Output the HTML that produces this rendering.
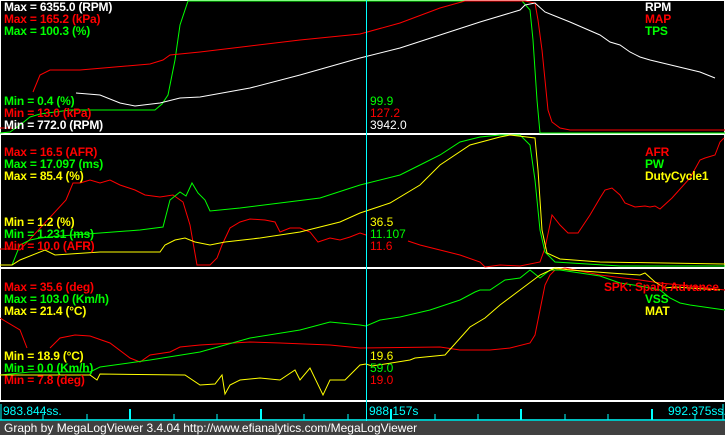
<!DOCTYPE html><html><head><style>
body{margin:0;background:#000;width:725px;height:435px;overflow:hidden;position:relative;font-family:"Liberation Sans",Arial,sans-serif}
.t{position:absolute;font-size:12px;font-weight:bold;line-height:12px;white-space:nowrap;letter-spacing:-0.2px}
.v{position:absolute;font-size:12px;line-height:12px;white-space:nowrap}
.w{color:#fff}.r{color:#f00}.g{color:#0f0}.y{color:#ff0}.c{color:#0ff}
</style></head><body>
<svg width="725" height="435" style="position:absolute;left:0;top:0" fill="none" stroke-width="1">
<line x1="0" y1="0.5" x2="725" y2="0.5" stroke="#fff"/>
<line x1="0" y1="134" x2="725" y2="134" stroke="#fff" stroke-width="2"/>
<line x1="0" y1="268" x2="725" y2="268" stroke="#fff" stroke-width="2"/>
<line x1="0" y1="401" x2="725" y2="401" stroke="#fff" stroke-width="2"/>
<line x1="0.5" y1="0" x2="0.5" y2="402" stroke="#fff"/>
<line x1="724.5" y1="0" x2="724.5" y2="402" stroke="#fff"/>
<polyline stroke="#0f0" points="0,133 10,132 20,125 30,117 40,114 70,110 155,110 162,104 168,95 175,60 180,25 188,1 522,1 530,10 533,40 537,100 540,133 725,133"/>
<polyline stroke="#f00" points="0,128 12,128"/>
<polyline stroke="#f00" points="33,92 40,75 50,70 80,70 150,64 163,60 170,55 200,52 250,46 300,40 360,34 400,23 440,8 465,1 525,1 535,3 538,20 542,50 545,80 548,110 552,122 560,128 570,130 725,130"/>
<polyline stroke="#fff" points="76,93 100,95 120,103 135,106 160,103 180,98 200,97 250,88 300,75 360,58 400,48 440,35 480,22 520,10 525,5 535,3 545,12 555,16 570,22 600,35 610,42 620,45 630,52 640,57 650,60 700,72 715,78"/>
<polyline stroke="#f00" points="0,249 6,249 12,249 20,250 66,200 73,183 80,183 90,180 100,183 110,180 120,185 135,190 145,195 160,197 173,195 183,202 190,225 197,265 210,265 217,258 222,245 230,228 240,222 250,219 265,220 275,222 280,232 290,228 300,228 310,232 318,242 330,238 340,240 350,237 360,233 366,235"/>
<polyline stroke="#f00" points="408,241 420,245 440,250 460,255 480,262 485,267 500,265 520,266 540,262 545,248 552,215 560,225 568,233 578,233 590,215 600,198 605,190 612,188 620,195 625,203 635,207 645,206 650,207 655,206 660,209 672,198 690,178 700,160 705,158 715,155 720,142 724,138"/>
<polyline stroke="#0f0" points="0,265 12,265 20,245 30,240 40,238 60,236 100,233 140,230 163,227 170,200 180,192 186,196 192,183 198,193 205,200 210,211 240,208 280,203 320,198 360,185 400,175 420,165 440,155 460,142 480,137 500,135 520,135 530,145 535,180 540,230 545,252 555,262 620,266 725,266"/>
<polyline stroke="#ff0" points="0,265 12,265 20,260 45,250 55,255 100,252 160,252 165,245 175,240 185,238 195,242 210,245 225,242 260,238 300,232 340,222 360,213 390,203 420,185 440,165 470,145 500,137 510,135 535,138 538,170 542,230 547,253 560,259 600,262 725,264"/>
<polyline stroke="#f00" points="0,318 20,330 27,348"/>
<polyline stroke="#f00" points="50,348 60,338 75,335 90,336 110,343 130,358 140,362 150,355 170,352 180,347 200,345 250,342 280,343 330,345 360,348 440,347 460,350 490,350 510,348 530,343 535,335 540,310 545,285 550,275 555,270 565,268 600,275 640,280 660,283 700,287 725,290"/>
<polyline stroke="#0f0" points="0,375 30,372 90,372 100,367 150,360 200,352 250,338 300,330 330,322 360,325 366,326 380,320 400,317 430,310 460,300 475,292 480,290 490,290 505,280 520,278 530,270 540,278 550,270 560,270 580,273 600,276 620,283 640,286 660,290 670,298 680,303 690,305 725,310"/>
<polyline stroke="#ff0" points="0,375 90,375 97,380 100,374 185,375 200,385 215,384 222,375 225,394 230,385 240,380 260,378 280,380 295,370 300,380 310,368 323,395 330,380 345,380 360,365 366,364 372,366 410,360 415,358 445,355 470,327 485,318 500,305 520,290 540,275 555,268 570,270 610,273 640,275 645,273 655,282 665,288 675,287 720,290"/>
<line x1="366.5" y1="0" x2="366.5" y2="421" stroke="#0ff"/>
<line x1="0" y1="420" x2="725" y2="420" stroke="#0ff" stroke-width="1.5"/>
<g stroke="#0ff">
<line x1="1" y1="404" x2="1" y2="420"/><line x1="43" y1="414" x2="43" y2="420"/><line x1="87" y1="414" x2="87" y2="420"/><line x1="130" y1="409" x2="130" y2="420" stroke-width="2"/><line x1="174" y1="414" x2="174" y2="420"/><line x1="217" y1="414" x2="217" y2="420"/><line x1="261" y1="409" x2="261" y2="420" stroke-width="2"/><line x1="304" y1="414" x2="304" y2="420"/><line x1="348" y1="414" x2="348" y2="420"/><line x1="391" y1="409" x2="391" y2="420" stroke-width="2"/><line x1="435" y1="414" x2="435" y2="420"/><line x1="478" y1="414" x2="478" y2="420"/><line x1="521" y1="409" x2="521" y2="420" stroke-width="2"/><line x1="565" y1="414" x2="565" y2="420"/><line x1="608" y1="414" x2="608" y2="420"/><line x1="652" y1="409" x2="652" y2="420" stroke-width="2"/><line x1="695" y1="414" x2="695" y2="420"/><line x1="723" y1="404" x2="723" y2="420"/>
</g>
</svg>
<div class="t w" style="left:4px;top:1px">Max = 6355.0 (RPM)</div>
<div class="t r" style="left:4px;top:13px">Max = 165.2 (kPa)</div>
<div class="t g" style="left:4px;top:25px">Max = 100.3 (%)</div>
<div class="t g" style="left:4px;top:95px">Min = 0.4 (%)</div>
<div class="t r" style="left:4px;top:107px">Min = 13.0 (kPa)</div>
<div class="t w" style="left:4px;top:119px">Min = 772.0 (RPM)</div>
<div class="t w" style="left:645px;top:1px">RPM</div>
<div class="t r" style="left:645px;top:13px">MAP</div>
<div class="t g" style="left:645px;top:25px">TPS</div>
<div class="v g" style="left:370px;top:95px">99.9</div>
<div class="v r" style="left:370px;top:107px">127.2</div>
<div class="v w" style="left:370px;top:119px">3942.0</div>
<div class="t r" style="left:4px;top:146px">Max = 16.5 (AFR)</div>
<div class="t g" style="left:4px;top:158px">Max = 17.097 (ms)</div>
<div class="t y" style="left:4px;top:170px">Max = 85.4 (%)</div>
<div class="t y" style="left:4px;top:216px">Min = 1.2 (%)</div>
<div class="t g" style="left:4px;top:228px">Min = 1.231 (ms)</div>
<div class="t r" style="left:4px;top:240px">Min = 10.0 (AFR)</div>
<div class="t r" style="left:645px;top:146px">AFR</div>
<div class="t g" style="left:645px;top:158px">PW</div>
<div class="t y" style="left:645px;top:170px">DutyCycle1</div>
<div class="v y" style="left:370px;top:216px">36.5</div>
<div class="v g" style="left:370px;top:228px">11.107</div>
<div class="v r" style="left:370px;top:240px">11.6</div>
<div class="t r" style="left:4px;top:281px">Max = 35.6 (deg)</div>
<div class="t g" style="left:4px;top:293px">Max = 103.0 (Km/h)</div>
<div class="t y" style="left:4px;top:305px">Max = 21.4 (°C)</div>
<div class="t y" style="left:4px;top:350px">Min = 18.9 (°C)</div>
<div class="t g" style="left:4px;top:362px">Min = 0.0 (Km/h)</div>
<div class="t r" style="left:4px;top:374px">Min = 7.8 (deg)</div>
<div class="t r" style="left:604px;top:281px">SPK: Spark Advance</div>
<div class="t g" style="left:645px;top:293px">VSS</div>
<div class="t y" style="left:645px;top:305px">MAT</div>
<div class="v y" style="left:370px;top:350px">19.6</div>
<div class="v g" style="left:370px;top:362px">59.0</div>
<div class="v r" style="left:370px;top:374px">19.0</div>
<div class="v c" style="left:3px;top:405px">983.844ss.</div>
<div class="v c" style="left:369px;top:405px">988.157s</div>
<div class="v c" style="left:668px;top:405px">992.375ss.</div>
<div style="position:absolute;left:0;top:421px;width:725px;height:14px;background:#404040"></div>
<div class="v w" style="left:4px;top:422px">Graph by MegaLogViewer 3.4.04 http://www.efianalytics.com/MegaLogViewer</div>
</body></html>
